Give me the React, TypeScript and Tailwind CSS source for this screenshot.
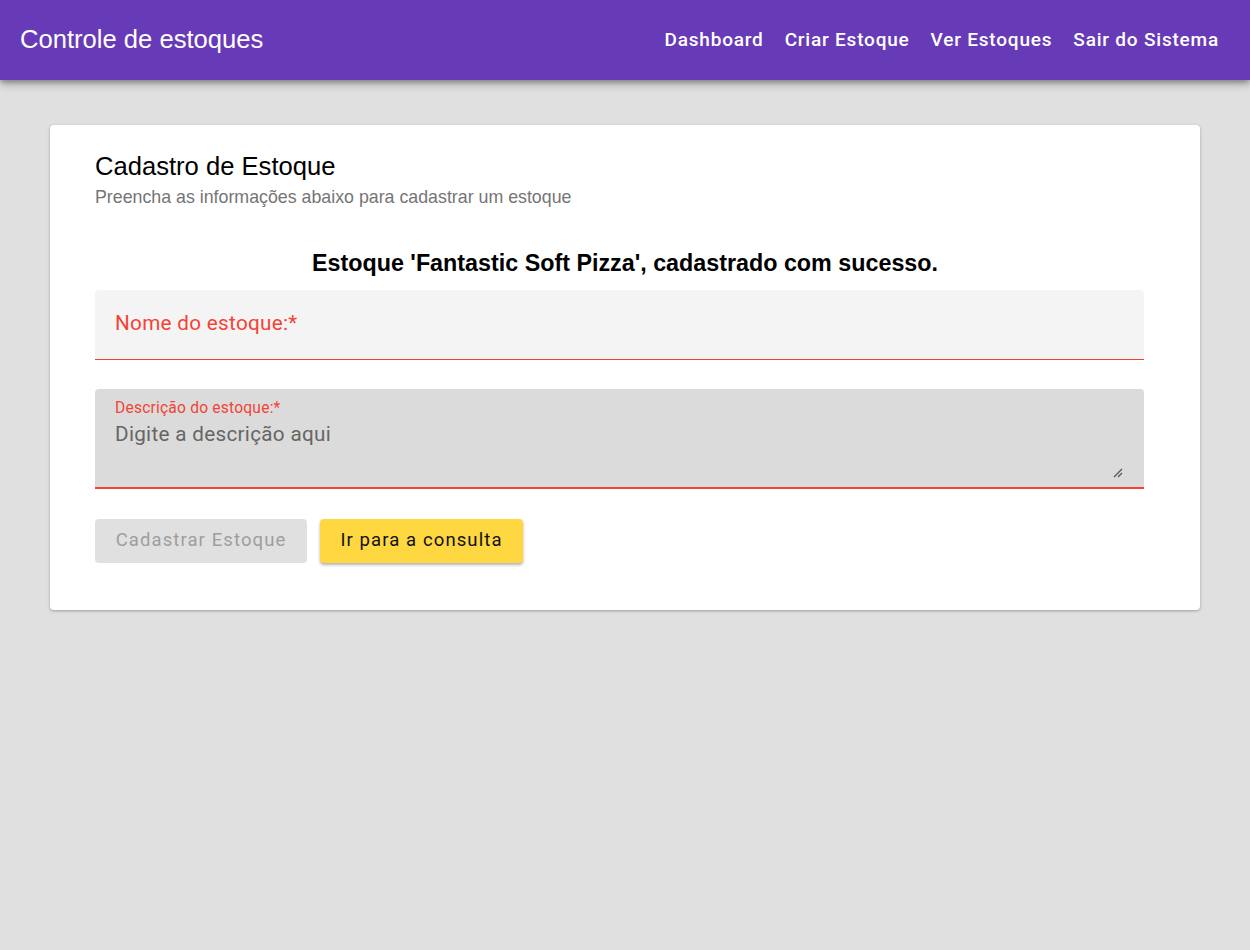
import React from "react";

export default function App() {
  return (
    <div className="min-h-[950px] bg-[#e0e0e0]" style={{ fontFamily: "'Liberation Sans', Arial, sans-serif" }}>
      <header className="h-[80px] bg-[#673ab7] flex items-center justify-between pl-[20px] pr-[31px] shadow-[0_2px_6px_rgba(0,0,0,0.35),0_4px_10px_rgba(0,0,0,0.2)] relative z-10">
        <div className="text-white text-[25.6px] leading-none">Controle de estoques</div>
        <nav className="flex gap-[21px] text-white text-[19px] font-medium tracking-[0.8px]" style={{ fontFamily: "Roboto, sans-serif" }}>
          <span>Dashboard</span>
          <span>Criar Estoque</span>
          <span>Ver Estoques</span>
          <span>Sair do Sistema</span>
        </nav>
      </header>
      <main className="pt-[45px] px-[50px]">
        <div className="bg-white rounded-[4px] shadow-[0_1px_3px_rgba(0,0,0,0.3)] px-[45px] pt-[26px] pb-[47px]">
          <h1 className="text-[25.6px] leading-[30px] text-black">Cadastro de Estoque</h1>
          <p className="text-[17.8px] leading-[22px] text-[#757575] mt-[5px]">Preencha as informações abaixo para cadastrar um estoque</p>
          <p className="text-center font-bold text-[23.3px] leading-[28px] text-black mt-[41px]">Estoque 'Fantastic Soft Pizza', cadastrado com sucesso.</p>
          <div className="mr-[11px]">
            <div className="mt-[13px] h-[70px] bg-[#f4f4f4] rounded-t-[4px] border-b border-[#f44336] flex items-center px-[20px]" style={{ fontFamily: "Roboto, sans-serif" }}>
              <span className="text-[20.7px] text-[#f44336] tracking-[0.3px] -mt-[2px]">Nome do estoque:*</span>
            </div>
            <div className="mt-[29px] h-[100px] bg-[#dbdbdb] rounded-t-[4px] border-b-2 border-[#f44336] relative px-[20px] pt-[10px]" style={{ fontFamily: "Roboto, sans-serif" }}>
              <div className="text-[15.6px] leading-[18px] text-[#f44336] tracking-[0.2px]">Descrição do estoque:*</div>
              <div className="text-[20.7px] leading-[26px] text-[#666666] tracking-[0.3px] mt-[4px]">Digite a descrição aqui</div>
              <svg className="absolute right-[21px] bottom-[9px]" width="10" height="10" viewBox="0 0 10 10">
                <line x1="1" y1="9" x2="9" y2="1" stroke="#555" strokeWidth="1.2" />
                <line x1="5" y1="9" x2="9" y2="5" stroke="#555" strokeWidth="1.2" />
              </svg>
            </div>
            <div className="mt-[30px] flex gap-[13px]" style={{ fontFamily: "Roboto, sans-serif" }}>
              <div className="h-[44px] w-[212px] rounded-[4px] bg-[#e0e0e0] text-[#9e9e9e] text-[18.5px] tracking-[1.1px] flex items-center justify-center">Cadastrar Estoque</div>
              <div className="h-[44px] w-[203px] rounded-[4px] bg-[#ffd740] text-[#111] text-[18.5px] tracking-[1.1px] flex items-center justify-center shadow-[0_2px_3px_rgba(0,0,0,0.3)]">Ir para a consulta</div>
            </div>
          </div>
        </div>
      </main>
    </div>
  );
}
